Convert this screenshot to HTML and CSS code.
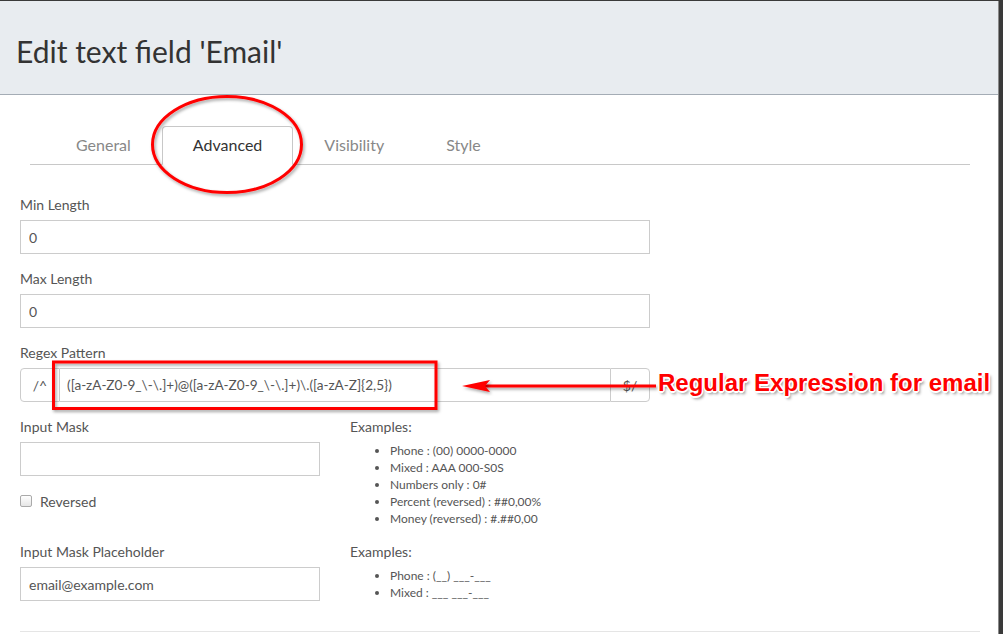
FILE: index.html
```html
<!DOCTYPE html>
<html>
<head>
<meta charset="utf-8">
<link rel="stylesheet" href="styles.css">
</head>
<body>
<div class="panel">
  <header class="modal-header">
    <h1 class="title">Edit text field 'Email'</h1>
  </header>
  <div class="modal-body">
    <ul class="tabs">
      <li class="tab">General</li>
      <li class="tab active">Advanced</li>
      <li class="tab">Visibility</li>
      <li class="tab">Style</li>
    </ul>
    <form class="form">
      <div class="group">
        <label class="label">Min Length</label>
        <input class="input wide" value="0">
      </div>
      <div class="group">
        <label class="label">Max Length</label>
        <input class="input wide" value="0">
      </div>
      <div class="group">
        <label class="label">Regex Pattern</label>
        <div class="input-group">
          <span class="addon addon-left">/^</span>
          <input class="input grow" value="([a-zA-Z0-9_\-\.]+)@([a-zA-Z0-9_\-\.]+)\.([a-zA-Z]{2,5})">
          <span class="addon addon-right">$/</span>
        </div>
      </div>
      <div class="row">
        <div class="col-left">
          <div class="group">
            <label class="label">Input Mask</label>
            <input class="input" value="">
          </div>
          <label class="check"><input type="checkbox" class="box">Reversed</label>
        </div>
        <div class="col-right">
          <div class="label">Examples:</div>
          <ul class="examples">
            <li>Phone : (00) 0000-0000</li>
            <li>Mixed : AAA 000-S0S</li>
            <li>Numbers only : 0#</li>
            <li>Percent (reversed) : ##0,00%</li>
            <li>Money (reversed) : #.##0,00</li>
          </ul>
        </div>
      </div>
      <div class="row row-last">
        <div class="col-left">
          <div class="group">
            <label class="label">Input Mask Placeholder</label>
            <input class="input" value="email@example.com">
          </div>
        </div>
        <div class="col-right">
          <div class="label">Examples:</div>
          <ul class="examples">
            <li>Phone : (__) ___-___</li>
            <li>Mixed : ___ ___-___</li>
          </ul>
        </div>
      </div>
    </form>
    <div class="footer-line"></div>
  </div>
</div>

<svg class="annot" width="1003" height="634" viewBox="0 0 1003 634">
  <defs>
    <filter id="sh" x="-10%" y="-10%" width="130%" height="140%">
      <feDropShadow dx="1.5" dy="2" stdDeviation="1.5" flood-color="#000" flood-opacity="0.35"/>
    </filter>
  </defs>
  <g filter="url(#sh)" fill="none" stroke="#f00" stroke-width="3">
    <ellipse cx="227" cy="144.5" rx="74.5" ry="48"/>
    <rect x="53.5" y="362" width="382.5" height="46.5"/>
    <line x1="484" y1="386" x2="656" y2="386"/>
  </g>
  <polygon filter="url(#sh)" fill="#f00" points="462,386 490,380 485,386 490,392"/>
</svg>
<div class="annot-text">Regular Expression for email</div>
</body>
</html>
```

FILE: styles.css
```css
html, body {
  margin: 0;
  padding: 0;
}
body {
  position: relative;
  width: 1003px;
  height: 634px;
  overflow: hidden;
  background: #3a3a3a;
  font-family: Lato, "Open Sans", sans-serif;
}
.panel {
  width: 999px;
  height: 633px;
  margin-top: 1px;
  background: #fff;
  border-right: 1px solid #8a8a8a;
  box-sizing: border-box;
  overflow: hidden;
}
.modal-header {
  background: #e8ecf0;
  height: 94px;
  box-sizing: border-box;
  border-bottom: 1px solid #a4acb5;
  padding: 33px 16px 0;
}
.title {
  margin: 0;
  font-weight: 400;
  font-size: 30px;
  line-height: 34px;
  color: #333;
}
.modal-body {
  padding: 0 18px 0 20px;
}
.tabs {
  list-style: none;
  margin: 31px 10px 0;
  padding: 0 0 0 15px;
  display: flex;
  height: 38px;
  border-bottom: 1px solid #c8c8c8;
}
.tab {
  height: 39px;
  box-sizing: border-box;
  padding: 8px 30px 10px;
  line-height: 19px;
  font-size: 16px;
  color: #888;
  border: 1px solid transparent;
  border-radius: 4px 4px 0 0;
}
.tab.active {
  color: #333;
  background: #fff;
  border-color: #c8c8c8 #c8c8c8 #fff;
}
.form {
  margin-top: 31px;
}
.group {
  margin-bottom: 16px;
}
.label {
  display: block;
  font-size: 14px;
  line-height: 18px;
  color: #555;
  margin-bottom: 6px;
}
.input {
  display: block;
  box-sizing: border-box;
  width: 300px;
  height: 34px;
  padding: 0 8px;
  border: 1px solid #ccc;
  font-family: Lato, "Open Sans", sans-serif;
  font-size: 14px;
  color: #555;
  background: #fff;
  outline: none;
}
.input.wide {
  width: 630px;
}
.input-group {
  display: flex;
  width: 630px;
  height: 34px;
}
.input-group .input {
  flex: 1;
  width: auto;
  border-left: none;
  border-right: none;
  padding-left: 7px;
  border-radius: 0;
  font-size: 13.6px;
}
.addon {
  box-sizing: border-box;
  width: 40px;
  height: 34px;
  border: 1px solid #ccc;
  display: flex;
  align-items: center;
  justify-content: center;
  font-size: 14px;
  color: #555;
  background: #fff;
}
.addon-left {
  border-radius: 4px 0 0 4px;
}
.addon-right {
  border-radius: 0 4px 4px 0;
}
.row {
  display: grid;
  grid-template-columns: 300px 1fr;
  column-gap: 30px;
  margin-bottom: 16px;
}
.row-last {
  margin-bottom: 30px;
}
.row-last .group {
  margin-bottom: 0;
}
.check {
  display: flex;
  align-items: center;
  height: 18px;
  font-size: 14px;
  color: #555;
}
.box {
  appearance: none;
  -webkit-appearance: none;
  margin: 0 8px 0 0;
  width: 12px;
  height: 12px;
  box-sizing: border-box;
  border: 1px solid #aaa;
  border-radius: 2px;
  background: linear-gradient(#fff, #e6e6e6);
}
.examples {
  margin: 0;
  padding-left: 40px;
  font-size: 12px;
  line-height: 17px;
  color: #555;
}
.footer-line {
  height: 1px;
  background: #e5e5e5;
}
.annot {
  position: absolute;
  left: 0;
  top: 0;
  pointer-events: none;
}
.annot-text {
  position: absolute;
  left: 658px;
  top: 371px;
  font-family: "Liberation Sans", Arial, sans-serif;
  font-weight: 700;
  font-size: 24px;
  line-height: 24px;
  color: #f00;
  white-space: nowrap;
  text-shadow:
    -1px -1px 0 #fff, 1px -1px 0 #fff, -1px 1px 0 #fff, 1px 1px 0 #fff,
    0 -1.5px 0 #fff, 0 1.5px 0 #fff, -1.5px 0 0 #fff, 1.5px 0 0 #fff,
    2px 3px 3px rgba(0,0,0,0.45);
}
```
